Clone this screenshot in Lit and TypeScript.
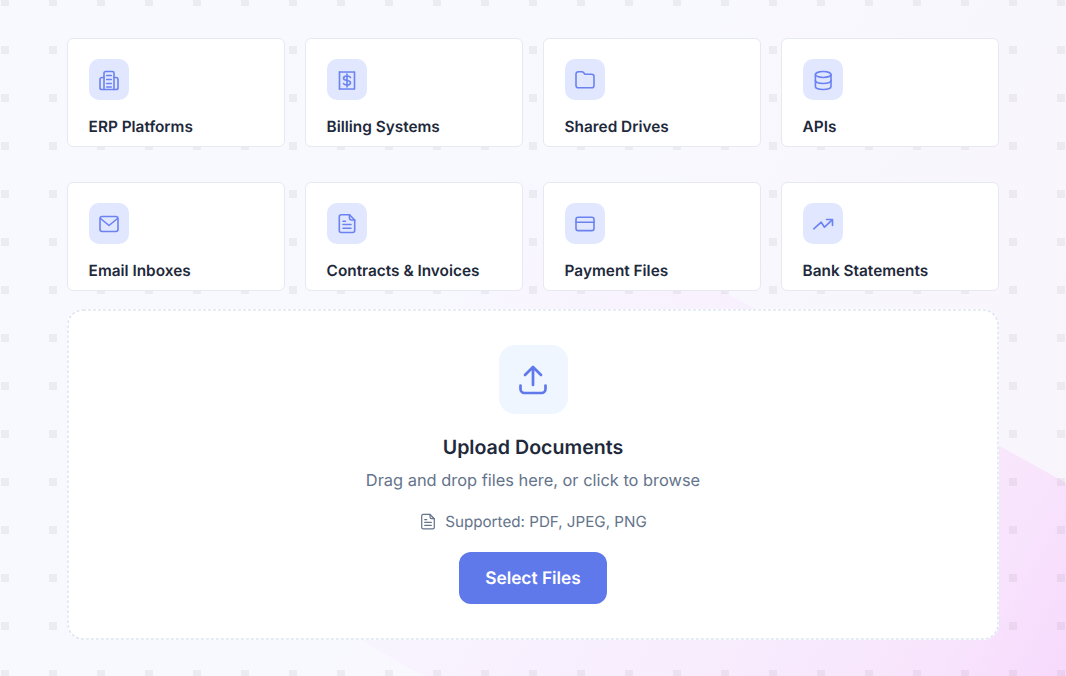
import { LitElement, html, css, svg } from 'lit';
import { customElement } from 'lit/decorators.js';

const icons: Record<string, unknown> = {
  erp: svg`<path d="M6 20.500V4c0-.8.7-1.500 1.500-1.500h7c.8 0 1.500.7 1.500 1.500v16.500"/><path d="M6 8.500H4.200C3 8.500 2 9.500 2 10.700v8c0 1 .8 1.800 1.800 1.800h14.400c1 0 1.800-.8 1.800-1.800v-8c0-1.200-1-2.200-2.200-2.200H16"/><path d="M8.700 6.500h4.600M8.700 10.500h4.600M8.700 14.500h4.600M8.700 18h4.600"/>`,
  billing: svg`<path stroke-dasharray="1.200 1" d="M3.500 3h15M3.500 20h15"/><path d="M3.500 3v17M18.500 3v17"/><path d="M14.500 8.500c-.4-1-1.600-1.500-3.500-1.500-2.200 0-3.500.9-3.500 2.300 0 3.200 7 1.200 7 4.400 0 1.400-1.300 2.300-3.500 2.300-1.900 0-3.100-.5-3.500-1.500M11 5v13"/>`,
  folder: svg`<path d="M2 5c0-1.300 1-2.300 2.300-2.300h3.600c.6 0 1.200.2 1.600.7L11 5.200h6.700C19 5.200 20 6.200 20 7.500v9c0 1.300-1 2.300-2.300 2.300H4.300C3 18.800 2 17.800 2 16.500z"/>`,
  db: svg`<ellipse cx="11.200" cy="5.500" rx="7.800" ry="3"/><path d="M3.400 5.500v12c0 1.700 3.500 3 7.800 3s7.800-1.300 7.800-3v-12"/><path d="M3.400 11.500c0 1.700 3.500 3 7.800 3s7.800-1.300 7.800-3"/>`,
  mail: svg`<rect x="2" y="3.500" width="18" height="15" rx="2.200"/><path d="M2.500 5.500l8.500 7 8.500-7"/>`,
  file: svg`<path d="M5.300 1.800h8.200l5.200 5.200v10.500c0 1.100-.9 2-2 2H5.300c-1.100 0-2-.9-2-2V3.800c0-1.100.9-2 2-2z"/><path d="M13.500 1.800V5c0 1.100.9 2 2 2h3.200"/><path d="M7 8.200h2.500M7 11.500h8M7 15.200h8"/>`,
  card: svg`<rect x="2" y="4.200" width="18" height="13.400" rx="2.200"/><path d="M2 9.200h18"/>`,
  trend: svg`<path d="M1.800 15.800l7.400-6.600 3.300 5 7.700-7.400"/><path d="M14.500 6.500h6v6"/>`,
};

const sources = [
  ['ERP Platforms', 'erp'],
  ['Billing Systems', 'billing'],
  ['Shared Drives', 'folder'],
  ['APIs', 'db'],
  ['Email Inboxes', 'mail'],
  ['Contracts & Invoices', 'file'],
  ['Payment Files', 'card'],
  ['Bank Statements', 'trend'],
];

@customElement('app-root')
export class AppRoot extends LitElement {
  static styles = css`
    :host {
      display: block;
      position: relative;
      width: 1066px;
      height: 676px;
      overflow: hidden;
      font-family: Inter, 'Liberation Sans', sans-serif;
      text-rendering: geometricPrecision;
      background-image: linear-gradient(120deg, #f8f9ff 0%, #f8f9ff 40%, #f9f4fc 100%);
    }
    .tint {
      position: absolute;
      inset: 0;
      background: linear-gradient(
        120deg,
        rgba(247, 218, 253, 0) 38%,
        rgba(247, 218, 253, 0.35) 75%,
        rgba(247, 218, 253, 0.6) 90%,
        #f7dafd 100%
      );
      clip-path: polygon(203px 0, 1066px 483px, 1066px 676px, 424px 676px, 0 438px, 0 0);
    }
    .dots {
      position: absolute;
      inset: 0;
      background-image: conic-gradient(at 8px 8px, transparent 270deg, rgba(60, 60, 60, 0.065) 270deg);
      background-size: 48px 48px;
      background-position: 1px -2px;
    }
    .page {
      position: relative;
      box-sizing: border-box;
      padding: 38px 67px 0;
    }
    .grid {
      display: grid;
      grid-template-columns: repeat(4, 1fr);
      grid-auto-rows: 109px;
      column-gap: 20px;
      row-gap: 35px;
    }
    .card {
      box-sizing: border-box;
      background: #fff;
      border: 1px solid #e6e9f2;
      border-radius: 6px;
      padding: 20px 20px 20px 20.6px;
    }
    .icon {
      width: 40.5px;
      height: 41px;
      border-radius: 10px;
      background: #e0e7ff;
      display: flex;
      align-items: center;
      justify-content: center;
      margin-bottom: 17px;
    }
    .icon svg {
      width: 22px;
      height: 22px;
      fill: none;
      stroke: #6b82f0;
      stroke-width: 1.6;
      stroke-linecap: round;
      stroke-linejoin: round;
    }
    .label {
      font-size: 15.36px;
      line-height: 19px;
      font-weight: 600;
      color: #1e293b;
    }
    .drop {
      position: relative;
      box-sizing: border-box;
      margin-top: 18px;
      height: 331px;
      background: #fff;
      border-radius: 16px;
      padding-top: 36px;
      display: flex;
      flex-direction: column;
      align-items: center;
    }
    .dash {
      position: absolute;
      left: 0;
      top: 0;
      fill: none;
      stroke: #dde6f0;
      stroke-width: 1.6;
      stroke-dasharray: 3 2;
    }
    .upload {
      width: 69px;
      height: 69px;
      border-radius: 16px;
      background: #eff6ff;
      display: flex;
      align-items: center;
      justify-content: center;
    }
    .upload svg {
      width: 36px;
      height: 36px;
      fill: none;
      stroke: #5f78ea;
      stroke-width: 2.7;
      stroke-linecap: round;
      stroke-linejoin: round;
    }
    h2 {
      margin: 20px 0 0;
      font-size: 19.6px;
      line-height: 26px;
      font-weight: 600;
      color: #1e293b;
    }
    .sub {
      margin: 8px 0 0;
      font-size: 16.4px;
      line-height: 24px;
      color: #64748b;
    }
    .formats {
      display: flex;
      align-items: center;
      gap: 8px;
      margin-top: 20px;
      font-size: 15.2px;
      line-height: 20px;
      color: #64748b;
    }
    .formats svg {
      width: 18px;
      height: 18px;
      fill: none;
      stroke: #64748b;
      stroke-width: 1.5;
      stroke-linecap: round;
      stroke-linejoin: round;
    }
    button {
      margin-top: 20px;
      width: 148px;
      height: 52px;
      border: none;
      border-radius: 12px;
      background: #5f78ea;
      color: #fff;
      font-family: inherit;
      font-size: 17.3px;
      font-weight: 600;
      text-rendering: inherit;
    }
  `;

  render() {
    return html`
      <div class="tint"></div>
      <div class="dots"></div>
      <div class="page">
        <div class="grid">
          ${sources.map(
            ([name, icon]) => html`
              <div class="card">
                <div class="icon"><svg viewBox="0 0 22 22">${icons[icon]}</svg></div>
                <div class="label">${name}</div>
              </div>
            `
          )}
        </div>
        <div class="drop">
          <svg class="dash" width="932" height="331">
            <rect x="1" y="1" width="930" height="329" rx="15" />
          </svg>
          <div class="upload">
            <svg viewBox="0 0 36 36">
              <path d="M18 23V6M10 13l8-8 8 8" />
              <path d="M5.500 23.500v3.500c0 2.200 1.800 4 4 4h17c2.200 0 4-1.800 4-4v-3.500" />
            </svg>
          </div>
          <h2>Upload Documents</h2>
          <p class="sub">Drag and drop files here, or click to browse</p>
          <div class="formats">
            <svg viewBox="0 0 22 22">${icons.file}</svg>
            <span>Supported: PDF, JPEG, PNG</span>
          </div>
          <button>Select Files</button>
        </div>
      </div>
    `;
  }
}
